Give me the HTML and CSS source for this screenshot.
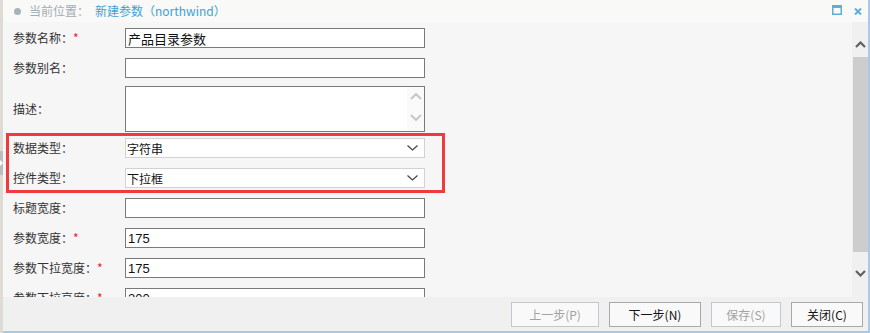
FILE: index.html
```html
<!DOCTYPE html>
<html lang="zh-CN">
<head>
    <meta charset="UTF-8">
    <title>新建参数</title>
    <link rel="stylesheet" href="styles.css">
</head>
<body>

<div class="window">
    <div class="edge"><span class="edge-tab"></span></div>
    <div class="main">
        <div class="header">
            <span class="dot"></span>
            <span class="crumb-label">当前位置：</span>
            <span class="crumb-current">新建参数（northwind）</span>
            <div class="header-tools">
                <svg class="tool-max" width="10" height="10" viewBox="0 0 10 10">
                    <rect x="0.75" y="0.75" width="8.5" height="8.5" fill="none" stroke="#5ab0da" stroke-width="1.5"/>
                    <rect x="0" y="0" width="10" height="3" fill="#5ab0da"/>
                </svg>
                <svg class="tool-close" width="8" height="7" viewBox="0 0 8 7">
                    <path d="M1 0.5 L7 6.5 M7 0.5 L1 6.5" stroke="#5ab0da" stroke-width="2"/>
                </svg>
            </div>
        </div>

        <div class="body">
            <div class="form">
                <div class="row">
                    <label class="label">参数名称：<span class="req">*</span></label>
                    <input class="field" type="text" value="产品目录参数">
                </div>
                <div class="row">
                    <label class="label">参数别名：</label>
                    <input class="field" type="text" value="">
                </div>
                <div class="row row-area">
                    <label class="label">描述：</label>
                    <div class="field area">
                        <div class="area-bar">
                            <svg width="12" height="7" viewBox="0 0 12 7"><path d="M1 6 L6 1 L11 6" fill="none" stroke="#c6c6c6" stroke-width="2"/></svg>
                            <svg width="12" height="7" viewBox="0 0 12 7"><path d="M1 1 L6 6 L11 1" fill="none" stroke="#c6c6c6" stroke-width="2"/></svg>
                        </div>
                    </div>
                </div>

                <div class="group">
                    <span class="mark"></span>
                    <div class="row">
                        <label class="label">数据类型：</label>
                        <div class="field select">
                            <span>字符串</span>
                            <svg width="11" height="6" viewBox="0 0 11 6"><path d="M0.5 0.5 L5.5 5 L10.5 0.5" fill="none" stroke="#444" stroke-width="1.2"/></svg>
                        </div>
                    </div>
                    <div class="row">
                        <label class="label">控件类型：</label>
                        <div class="field select">
                            <span>下拉框</span>
                            <svg width="11" height="6" viewBox="0 0 11 6"><path d="M0.5 0.5 L5.5 5 L10.5 0.5" fill="none" stroke="#444" stroke-width="1.2"/></svg>
                        </div>
                    </div>
                </div>

                <div class="row">
                    <label class="label">标题宽度：</label>
                    <input class="field" type="text" value="">
                </div>
                <div class="row">
                    <label class="label">参数宽度：<span class="req">*</span></label>
                    <input class="field" type="text" value="175">
                </div>
                <div class="row">
                    <label class="label">参数下拉宽度：<span class="req">*</span></label>
                    <input class="field" type="text" value="175">
                </div>
                <div class="row">
                    <label class="label">参数下拉高度：<span class="req">*</span></label>
                    <input class="field" type="text" value="200">
                </div>
            </div>

            <div class="scrollbar">
                <div class="sb-up">
                    <svg width="11" height="7" viewBox="0 0 11 7"><path d="M1 6 L5.5 1.5 L10 6" fill="none" stroke="#606060" stroke-width="2.2"/></svg>
                </div>
                <div class="sb-thumb"></div>
                <div class="sb-down">
                    <svg width="11" height="7" viewBox="0 0 11 7"><path d="M1 1 L5.5 5.5 L10 1" fill="none" stroke="#606060" stroke-width="2.2"/></svg>
                </div>
            </div>
        </div>

        <div class="footer">
            <button class="btn btn-prev" disabled>上一步(P)</button>
            <button class="btn btn-next">下一步(N)</button>
            <button class="btn btn-save" disabled>保存(S)</button>
            <button class="btn btn-close">关闭(C)</button>
        </div>
    </div>
</div>

</body>
</html>
```

FILE: styles.css
```css
body {
    margin: 0;
    font-family: "Noto Sans CJK SC", "Liberation Sans", sans-serif;
    font-size: 12px;
    color: #333;
    background-color: #f5f5f5;
}
.window {
    display: flex;
    width: 870px;
    height: 333px;
}
.edge {
    width: 3px;
    background-color: #dedbd5;
}
.edge-tab {
    display: block;
    margin-top: 151px;
    width: 3px;
    height: 24px;
    background-color: #bdbdbd;
    position: relative;
}
.edge-tab::after {
    content: "";
    position: absolute;
    left: 0;
    top: 9px;
    border-left: 3px solid #fff;
    border-top: 3px solid transparent;
    border-bottom: 3px solid transparent;
}
.main {
    flex: 1;
    display: flex;
    flex-direction: column;
    border-right: 2px solid #a9c9e6;
    border-bottom: 2px solid #a9c9e6;
    min-width: 0;
}
.header {
    height: 22px;
    display: flex;
    align-items: center;
    padding-left: 11px;
    background-color: #f9f9f7;
    line-height: 22px;
}
.dot {
    width: 7px;
    height: 7px;
    border-radius: 50%;
    background-color: #a9b2b9;
    margin-right: 8px;
}
.crumb-label {
    color: #a2adb5;
    margin-right: 6px;
}
.crumb-current {
    color: #3ea2d6;
}
.header-tools {
    margin-left: auto;
    display: flex;
    align-items: center;
    gap: 12px;
    padding-right: 6px;
}
.tool-max {
    margin-top: -2px;
}
.body {
    height: 275px;
    display: flex;
}
.form {
    flex: 1;
    padding: 6px 0 0 10px;
    overflow: hidden;
    background-color: #f6f6f6;
}
.row {
    display: flex;
    align-items: center;
    height: 20px;
    margin-bottom: 10px;
}
.row-area {
    height: 46px;
    margin-top: -2px;
    margin-bottom: 6px;
}
.label {
    width: 112px;
    color: #333;
    font-size: 12px;
    line-height: 20px;
}
.req {
    color: #e8232a;
}
.field {
    box-sizing: border-box;
    width: 300px;
    height: 20px;
    margin: 0;
    padding: 0 2px;
    border: 1px solid #7a7a7a;
    border-radius: 0;
    background-color: #fff;
    font-family: "Liberation Sans", "Noto Sans CJK SC", sans-serif;
    font-size: 13px;
    color: #111;
    outline: none;
}
.area {
    height: 46px;
    display: flex;
    justify-content: flex-end;
    padding: 0;
}
.area-bar {
    width: 17px;
    display: flex;
    flex-direction: column;
    align-items: center;
    justify-content: space-between;
    padding: 6px 0 10px;
    background-color: #fafafa;
}
.group {
    position: relative;
}
.mark {
    position: absolute;
    top: -5px;
    left: -7px;
    width: 439px;
    height: 60px;
    box-sizing: border-box;
    border: 3px solid #f03a3d;
}
.select {
    display: flex;
    align-items: center;
    justify-content: space-between;
    padding: 0 6px 0 1px;
    border-color: #d2d2d2;
    font-family: "Noto Sans CJK SC", sans-serif;
    font-size: 12px;
    color: #111;
}
.scrollbar {
    width: 16px;
    display: flex;
    flex-direction: column;
    background-color: #f0f0f0;
}
.sb-up {
    height: 35px;
    display: flex;
    justify-content: center;
    align-items: flex-end;
    padding-bottom: 9px;
    box-sizing: border-box;
}
.sb-thumb {
    height: 195px;
    margin-left: 1px;
    background-color: #cdcdcd;
}
.sb-down {
    flex: 1;
    display: flex;
    justify-content: center;
    padding-top: 18px;
}
.footer {
    flex: 1;
    display: flex;
    justify-content: flex-end;
    align-items: flex-start;
    gap: 10px;
    padding: 5px 5px 0 0;
    background-color: #f0f0f0;
}
.btn {
    height: 25px;
    padding: 0;
    border: 1px solid #a8a8a8;
    background-color: #f9f9f9;
    font-family: "Noto Sans CJK SC", sans-serif;
    font-size: 12px;
    color: #111;
}
.btn:disabled {
    border-color: #c3c8ce;
    color: #a2a2a2;
}
.btn-prev {
    width: 88px;
}
.btn-next {
    width: 92px;
}
.btn-save {
    width: 70px;
}
.btn-close {
    width: 72px;
}
```
